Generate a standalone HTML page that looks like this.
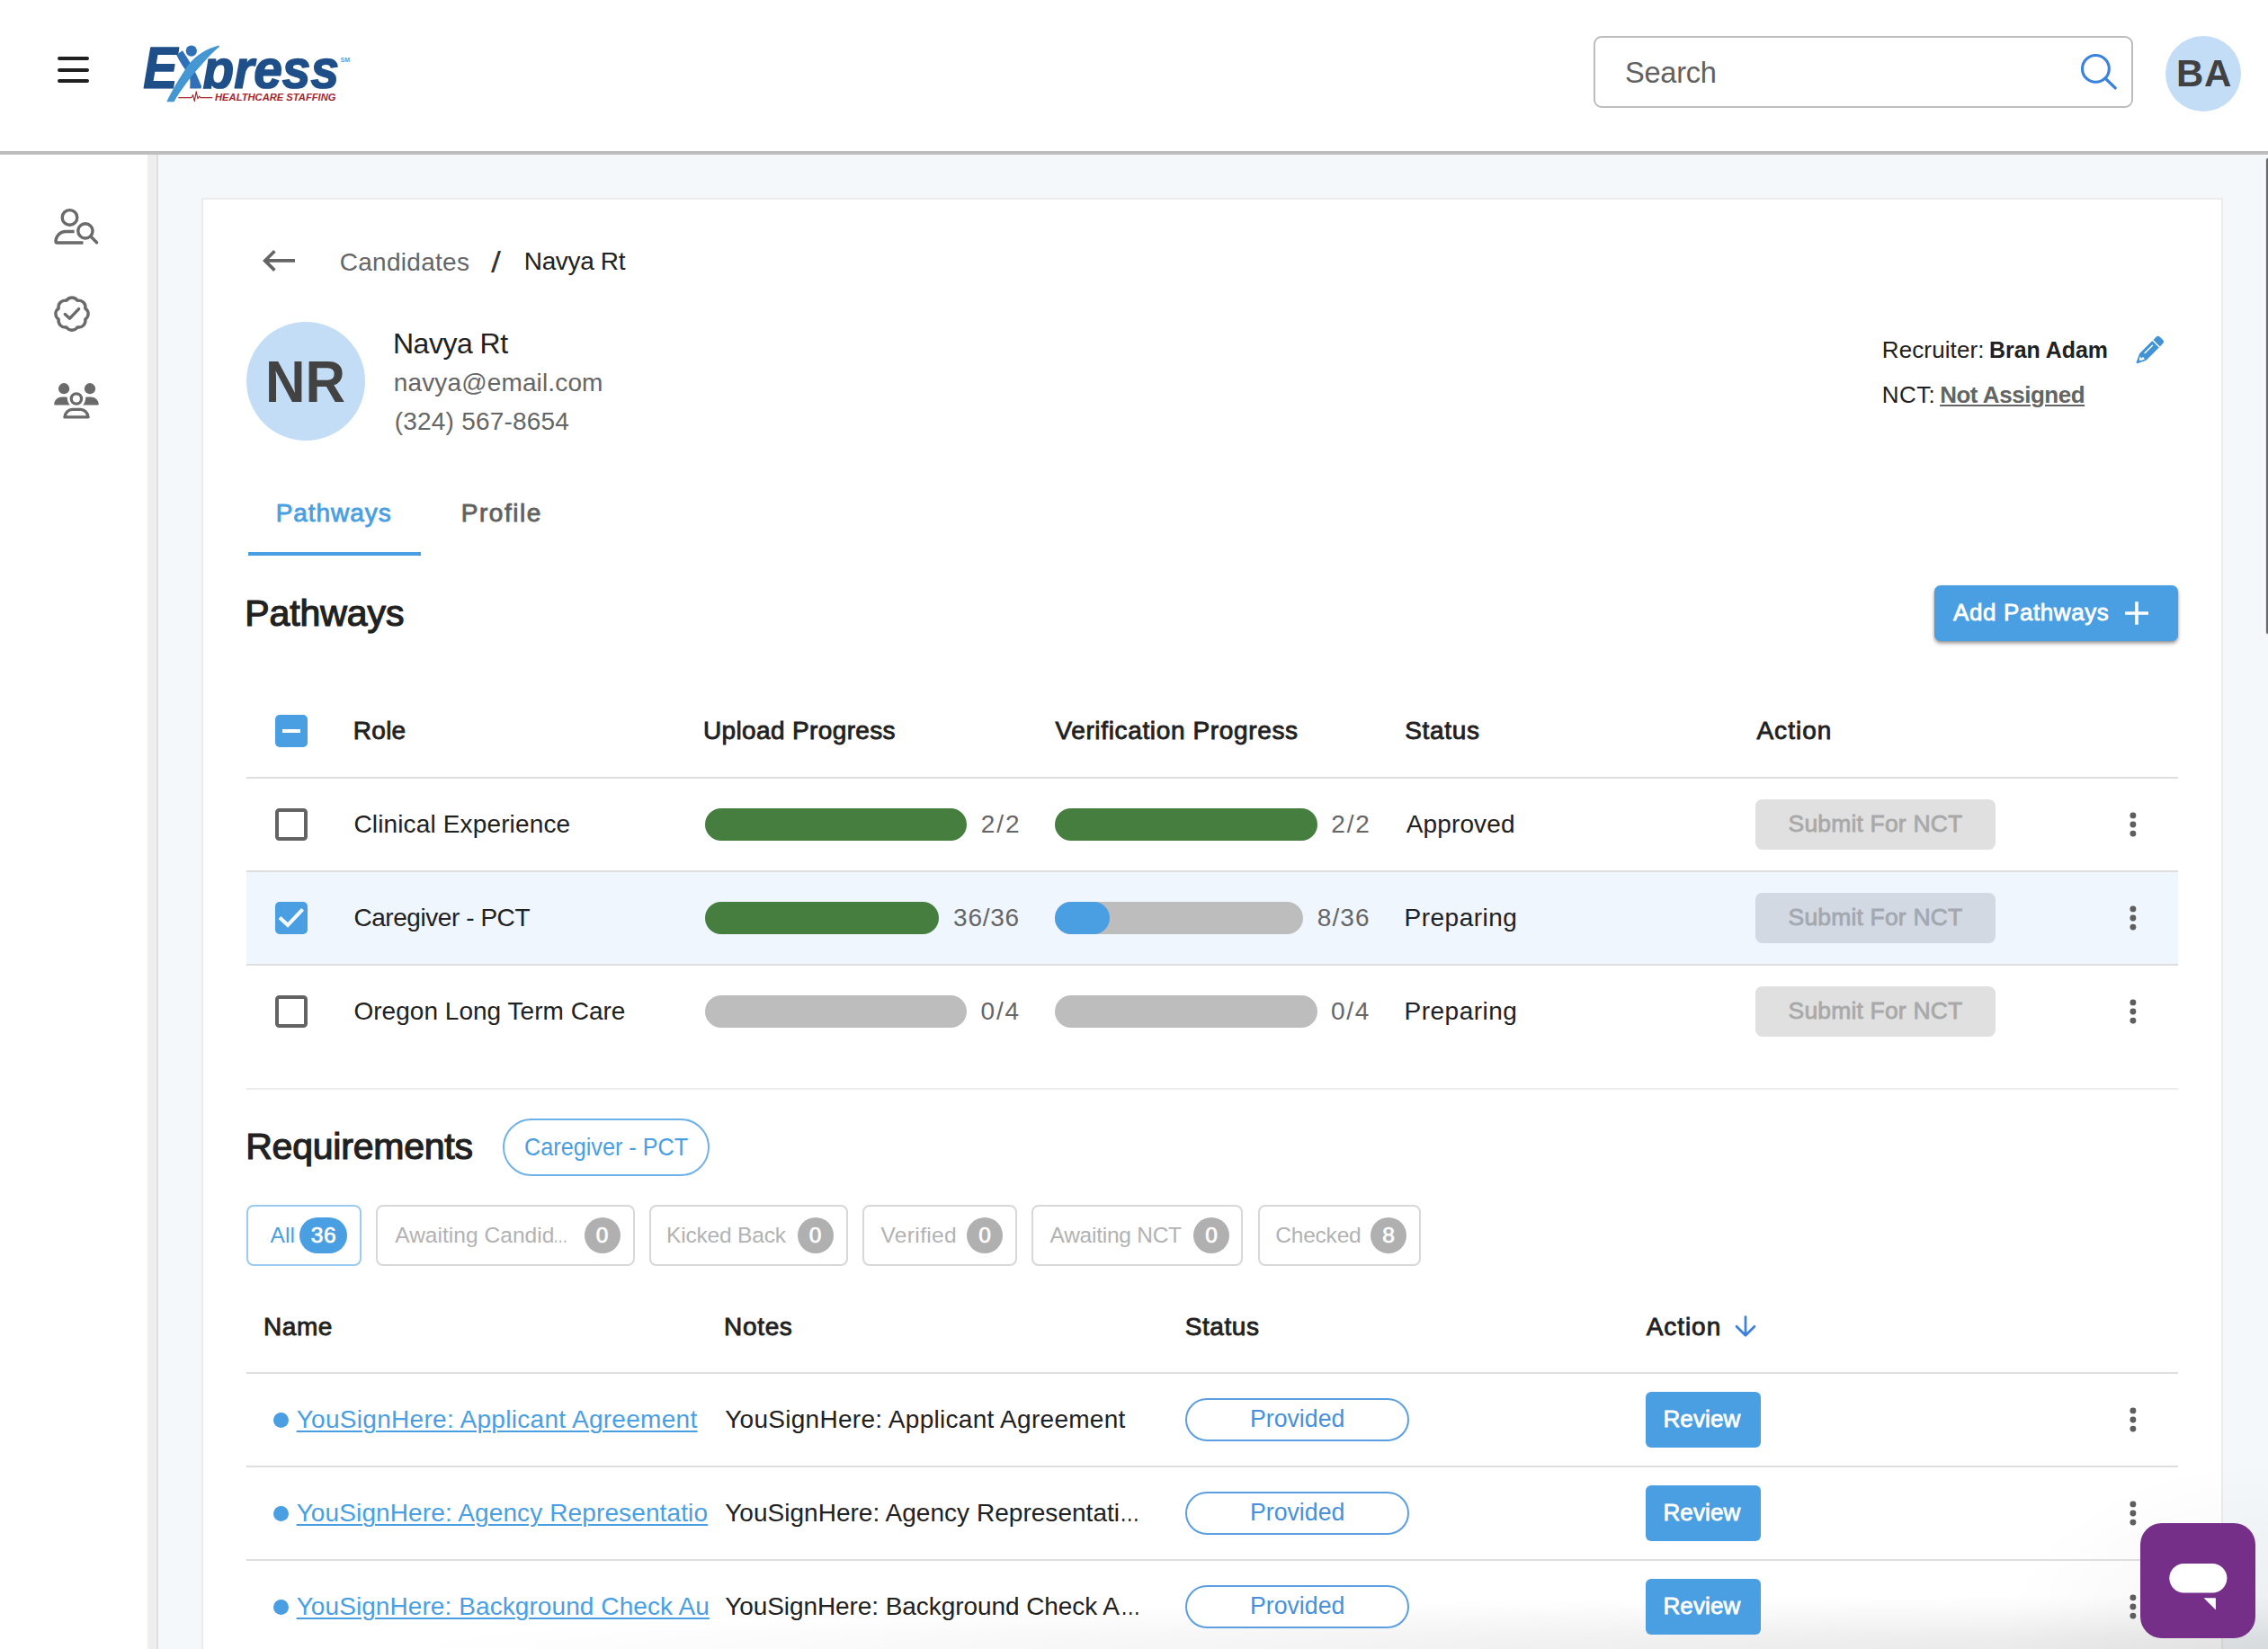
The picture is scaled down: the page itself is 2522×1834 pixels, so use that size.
<!DOCTYPE html>
<html><head><meta charset="utf-8"><title>Candidates</title>
<style>
html,body{margin:0;padding:0;}
body{width:2522px;height:1834px;overflow:hidden;background:#fff;font-family:"Liberation Sans",sans-serif;position:relative;}
.t{position:absolute;white-space:nowrap;line-height:1;}
.b{position:absolute;box-sizing:border-box;}
svg{position:absolute;overflow:visible;}
@media (max-width:1400px){html{zoom:0.5;}}
</style></head><body>
<div class="b" style="left:0px;top:0px;width:2522px;height:168px;background:#fff;"></div>
<div class="b" style="left:0px;top:168px;width:2522px;height:4px;background:#bdbdbd;"></div>
<div class="b" style="left:64px;top:63px;width:35px;height:4px;background:#1f1f1f;border-radius:2px;"></div>
<div class="b" style="left:64px;top:75.5px;width:35px;height:4px;background:#1f1f1f;border-radius:2px;"></div>
<div class="b" style="left:64px;top:88px;width:35px;height:4px;background:#1f1f1f;border-radius:2px;"></div>
<svg style="left:150px;top:40px" width="250" height="85" viewBox="150 40 250 85">
<g font-family="Liberation Sans" font-weight="bold" font-style="italic">
<clipPath id="cb"><rect x="150" y="40" width="250" height="58.7"/></clipPath>
<g clip-path="url(#cb)" fill="#1f4f88" stroke="#1f4f88" stroke-width="1.6" stroke-linejoin="round">
<text transform="translate(159.2 98) scale(0.885 1)" x="0" y="0" font-size="64.5">E</text>
<text x="225.5" y="98" font-size="60.5" textLength="151.5" lengthAdjust="spacingAndGlyphs">press</text>
</g>
<path d="M196.2 61 L202.9 56.3 C208 64 213 72 216.5 79 C219.5 85 222 91 224.2 96.5 L223.4 98.6 L211.2 98.6 C211.6 93 211.6 88 210.6 83 C205 77 200 69 196.2 61 Z" fill="#2f70b8"/>
<path d="M185.3 113.3 C191 101 200 86 209.5 72 C217 62 230 53.5 243.7 50.4 L244 52 C236 58 226 70 218.3 78.6 C210 88 200 102 193.5 113.3 Z" fill="#4497d3"/>
<circle cx="212.8" cy="56.6" r="6.1" fill="#2f70b8"/>
<text x="378.6" y="69" font-size="8" fill="#5a9fd6" font-style="normal" textLength="10.5" lengthAdjust="spacingAndGlyphs">SM</text>
<path d="M198.3 108.6 H213 L214.6 105.5 L216.3 112.6 L218.2 101.8 L220 109.8 L221.6 107 L223 108.6 H236.3" fill="none" stroke="#a5272d" stroke-width="1.1" stroke-linejoin="round"/>
<text x="239" y="112.3" font-size="11.8" fill="#a5272d" textLength="134.5" lengthAdjust="spacingAndGlyphs">HEALTHCARE STAFFING</text>
</g></svg>
<div class="b" style="left:1772px;top:40px;width:600px;height:80px;border:2px solid #bdbdbd;border-radius:9px;background:#fff;"></div>
<div class="t " style="left:1807.00px;top:65.00px;font-size:32.6px;color:#616161;letter-spacing:-0.260px;">Search</div>
<svg style="left:2310px;top:56px" width="50" height="50" viewBox="2310 56 50 50">
<circle cx="2330.4" cy="76.4" r="14.9" fill="none" stroke="#3b82dc" stroke-width="3.1"/>
<path d="M2341.2 87.2 L2352.2 97.9" stroke="#3b82dc" stroke-width="3.3" stroke-linecap="round"/></svg>
<div class="b" style="left:2408px;top:40px;width:84px;height:84px;border-radius:50%;background:#c3ddf7;"></div>
<div class="t " style="left:2420.05px;top:61.00px;font-size:42px;color:#414141;font-weight:bold;letter-spacing:0.550px;">BA</div>
<div class="b" style="left:0px;top:172px;width:164px;height:1662px;background:#fff;"></div>
<div class="b" style="left:164px;top:172px;width:10px;height:1662px;background:#eeeeee;"></div>
<div class="b" style="left:174px;top:172px;width:2px;height:1662px;background:#dedede;"></div>
<div class="b" style="left:176px;top:172px;width:2346px;height:1662px;background:#f4f8fb;"></div>
<svg style="left:56px;top:228px" width="60" height="50" viewBox="56 228 60 50">
<g fill="none" stroke="#6a6a6a" stroke-width="3.4" stroke-linecap="round" stroke-linejoin="round">
<circle cx="77.5" cy="241.9" r="8.3"/>
<path d="M82.6 257.5 H73.5 C66 257.5 62 263.5 62 268.4 Q62 270 63.6 270 H92.5" stroke-linecap="butt"/>
<circle cx="94.9" cy="256.9" r="8.1"/>
<path d="M101 263 L107.6 269.7"/>
</g></svg>
<svg style="left:56px;top:325px" width="50" height="50" viewBox="56 325 50 50">
<g fill="none" stroke="#6a6a6a" stroke-width="3.4" stroke-linecap="round" stroke-linejoin="round">
<path d="M73.88 334.32 A7.3 7.3 0 0 1 86.12 334.32 A7.3 7.3 0 0 1 94.78 342.98 A7.3 7.3 0 0 1 94.78 355.22 A7.3 7.3 0 0 1 86.12 363.88 A7.3 7.3 0 0 1 73.88 363.88 A7.3 7.3 0 0 1 65.22 355.22 A7.3 7.3 0 0 1 65.22 342.98 A7.3 7.3 0 0 1 73.88 334.32 Z"/>
<path d="M72.3 349.5 L77.6 354.2 L87.6 343.6"/>
</g></svg>
<svg style="left:56px;top:421px" width="60" height="50" viewBox="56 421 60 50">
<g fill="#6a6a6a">
<circle cx="71.1" cy="432.2" r="6.1"/>
<circle cx="100" cy="432.2" r="6.1"/>
<path d="M60.2 449.3 C60.6 444.5 64.5 441.4 69 441.4 H73.6 Q74.8 441.4 74.8 442.6 C74.9 445.5 75.8 448.2 77.8 450.6 H61.4 Q60.1 450.6 60.2 449.3 Z"/>
<path d="M109.8 449.3 C109.4 444.5 105.5 441.4 101 441.4 H96.4 Q95.2 441.4 95.2 442.6 C95.1 445.5 94.2 448.2 92.2 450.6 H108.6 Q109.9 450.6 109.8 449.3 Z"/>
</g>
<g fill="none" stroke="#6a6a6a" stroke-width="3.3" stroke-linejoin="round">
<circle cx="84.9" cy="443.5" r="5.65"/>
<path d="M71.9 463.9 C72.4 459.5 76 455.3 80.5 455.3 H89.5 C94 455.3 97.6 459.5 98.1 463.9 Z"/>
</g></svg>
<div class="b" style="left:224px;top:220px;width:2248px;height:1700px;background:#fff;border:2px solid #ececec;"></div>
<div class="b" style="left:420px;top:1774px;width:2102px;height:60px;background:radial-gradient(ellipse 100% 100% at 100% 100%,rgba(0,0,0,0.085) 0%,rgba(0,0,0,0.07) 25%,rgba(0,0,0,0.04) 55%,rgba(0,0,0,0.012) 85%,rgba(0,0,0,0) 100%);"></div>
<div class="b" style="left:2222px;top:1624px;width:300px;height:210px;background:radial-gradient(ellipse 100% 100% at 100% 100%,rgba(0,0,0,0.035) 0%,rgba(0,0,0,0.02) 60%,rgba(0,0,0,0) 100%);"></div>
<svg style="left:288px;top:274px" width="44" height="34" viewBox="288 274 44 34">
<path d="M328 289.9 H296 M305.4 279.2 L294.6 289.9 L305.4 300.6" fill="none" stroke="#646464" stroke-width="3.6" stroke-linecap="butt" stroke-linejoin="miter"/></svg>
<div class="t " style="left:377.75px;top:278.00px;font-size:28px;color:#666;letter-spacing:0.278px;">Candidates</div>
<div class="t " style="left:546.40px;top:275.00px;font-size:33.5px;color:#333;transform:scaleX(1.18);transform-origin:0 0;">/</div>
<div class="t " style="left:582.75px;top:277.00px;font-size:28px;color:#212121;letter-spacing:-0.343px;">Navya Rt</div>
<div class="b" style="left:274px;top:358px;width:132px;height:132px;border-radius:50%;background:#c3ddf7;"></div>
<div class="t " style="left:294.97px;top:392.00px;font-size:65px;color:#424242;font-weight:bold;transform:scaleX(0.9484);transform-origin:0 0;">NR</div>
<div class="t " style="left:437.00px;top:366.00px;font-size:32px;color:#212121;letter-spacing:-0.500px;">Navya Rt</div>
<div class="t " style="left:437.75px;top:412.00px;font-size:28px;color:#666;letter-spacing:0.139px;">navya@email.com</div>
<div class="t " style="left:438.75px;top:455.00px;font-size:28px;color:#666;letter-spacing:0.208px;">(324) 567-8654</div>
<div class="t " style="left:2092.80px;top:376.00px;font-size:26px;color:#212121;letter-spacing:0.111px;">Recruiter:</div>
<div class="t " style="left:2212.42px;top:376.00px;font-size:26px;color:#212121;font-weight:bold;transform:scaleX(0.9579);transform-origin:0 0;">Bran Adam</div>
<div class="t " style="left:2092.80px;top:426.00px;font-size:26px;color:#212121;letter-spacing:0.400px;">NCT:</div>
<div class="t " style="left:2157.15px;top:426.00px;font-size:26px;color:#646464;font-weight:bold;letter-spacing:-0.468px;text-decoration:underline;text-decoration-thickness:2px;text-underline-offset:2px;">Not Assigned</div>
<svg style="left:2372px;top:370px" width="38" height="38" viewBox="2372 370 38 38">
<g transform="translate(2376 403.8) rotate(-45)"><path d="M0.3 -0.9 L9 -5 Q10 -5.3 11 -5.3 H29.8 V5.3 H11 Q10 5.3 9 5 L0.3 0.9 Q-0.6 0 0.3 -0.9 Z M31.3 -5.3 H35.6 A3.2 3.2 0 0 1 38.8 -2.1 V2.1 A3.2 3.2 0 0 1 35.6 5.3 H31.3 Z" fill="#4193d3"/><path d="M13.7 -1.5 H26.9" stroke="#fff" stroke-width="1.5"/><path d="M4.6 -0.9 L8.2 -2.6 L7.4 0 L10 0.4 L9.4 3.2 L4.6 0.9 Z" fill="#fff"/></g></svg>
<div class="t " style="left:306.67px;top:557.00px;font-size:28px;color:#4a9fe2;-webkit-text-stroke:0.84px #4a9fe2;letter-spacing:0.944px;">Pathways</div>
<div class="t " style="left:512.77px;top:557.00px;font-size:28px;color:#616161;-webkit-text-stroke:0.84px #616161;letter-spacing:1.527px;">Profile</div>
<div class="b" style="left:276px;top:614px;width:192px;height:4px;background:#4a9fe2;"></div>
<div class="t " style="left:272.37px;top:662.00px;font-size:41px;color:#212121;-webkit-text-stroke:1.23px #212121;letter-spacing:-0.104px;">Pathways</div>
<div class="b" style="left:2151px;top:651px;width:271px;height:62px;background:#4a9fe2;border-radius:7px;box-shadow:0 3px 4px rgba(0,0,0,0.3),0 1px 3px rgba(0,0,0,0.2);"></div>
<div class="t " style="left:2172.09px;top:668.00px;font-size:26px;color:#fff;-webkit-text-stroke:0.78px #fff;letter-spacing:0.597px;">Add Pathways</div>
<svg style="left:2360px;top:666px" width="32" height="32" viewBox="2360 666 32 32"><path d="M2363 682 H2389 M2376 669.2 V694.8" stroke="#fff" stroke-width="3.6" fill="none"/></svg>
<div class="b" style="left:306px;top:795px;width:36px;height:36px;background:#4a9fe2;border-radius:5px;"></div>
<div class="b" style="left:314px;top:811px;width:20px;height:4px;background:#fff;"></div>
<div class="t " style="left:392.87px;top:799.00px;font-size:28px;color:#212121;-webkit-text-stroke:0.84px #212121;letter-spacing:0.237px;">Role</div>
<div class="t " style="left:782.02px;top:799.00px;font-size:28px;color:#212121;-webkit-text-stroke:0.84px #212121;letter-spacing:0.361px;">Upload Progress</div>
<div class="t " style="left:1173.42px;top:799.00px;font-size:28px;color:#212121;-webkit-text-stroke:0.84px #212121;letter-spacing:0.646px;">Verification Progress</div>
<div class="t " style="left:1562.17px;top:799.00px;font-size:28px;color:#212121;-webkit-text-stroke:0.84px #212121;letter-spacing:0.682px;">Status</div>
<div class="t " style="left:1953.42px;top:799.00px;font-size:28px;color:#212121;-webkit-text-stroke:0.84px #212121;letter-spacing:1.032px;">Action</div>
<div class="b" style="left:274px;top:864px;width:2148px;height:2px;background:#dedede;"></div>
<div class="b" style="left:306px;top:899px;width:36px;height:36px;border:4px solid #636363;border-radius:4.5px;background:#fff;"></div>
<div class="t " style="left:393.45px;top:903.00px;font-size:28px;color:#212121;letter-spacing:0.142px;">Clinical Experience</div>
<div class="b" style="left:783.6px;top:899px;width:291.5px;height:36px;background:#467e3f;border-radius:18px;overflow:hidden;"></div>
<div class="t " style="left:1090.75px;top:903.00px;font-size:28px;color:#666;letter-spacing:1.925px;">2/2</div>
<div class="b" style="left:1173px;top:899px;width:291.5px;height:36px;background:#467e3f;border-radius:18px;overflow:hidden;"></div>
<div class="t " style="left:1480.15px;top:903.00px;font-size:28px;color:#666;letter-spacing:1.925px;">2/2</div>
<div class="t " style="left:1563.80px;top:903.00px;font-size:28px;color:#212121;letter-spacing:0.114px;">Approved</div>
<div class="b" style="left:1952px;top:889px;width:267px;height:56px;background:#e0e0e0;border-radius:7.5px;"></div>
<div class="t " style="left:1988.55px;top:903.00px;font-size:26.5px;color:#a9a9a9;-webkit-text-stroke:0.79px #a9a9a9;letter-spacing:0.173px;">Submit For NCT</div>
<svg style="left:2360px;top:897px" width="24" height="40" viewBox="0 0 24 40"><g fill="#5e5e5e"><circle cx="11.9" cy="9.9" r="3.45"/><circle cx="11.9" cy="20" r="3.45"/><circle cx="11.9" cy="30.1" r="3.45"/></g></svg>
<div class="b" style="left:274px;top:970px;width:2148px;height:102px;background:#eff6fe;"></div>
<div class="b" style="left:274px;top:968px;width:2148px;height:2px;background:#dedede;"></div>
<div class="b" style="left:306px;top:1003px;width:36px;height:36px;background:#4a9fe2;border-radius:5px;"></div>
<svg style="left:306px;top:1003px" width="36" height="36" viewBox="0 0 36 36"><path d="M5 17.6 L14 25.8 L30.6 8.4" stroke="#f4f9fe" stroke-width="4.1" fill="none"/></svg>
<div class="t " style="left:393.45px;top:1007.00px;font-size:28px;color:#212121;letter-spacing:-0.443px;">Caregiver - PCT</div>
<div class="b" style="left:783.6px;top:1003px;width:260px;height:36px;background:#467e3f;border-radius:18px;overflow:hidden;"></div>
<div class="t " style="left:1060.10px;top:1007.00px;font-size:28px;color:#666;letter-spacing:0.750px;">36/36</div>
<div class="b" style="left:1173px;top:1003px;width:276px;height:36px;background:#bdbdbd;border-radius:18px;overflow:hidden;"></div>
<div class="b" style="left:1173px;top:1003px;width:61px;height:36px;background:#4a9fe2;border-radius:18px;"></div>
<div class="t " style="left:1464.75px;top:1007.00px;font-size:28px;color:#666;letter-spacing:1.083px;">8/36</div>
<div class="t " style="left:1561.55px;top:1007.00px;font-size:28px;color:#212121;letter-spacing:0.494px;">Preparing</div>
<div class="b" style="left:1952px;top:993px;width:267px;height:56px;background:#d3d9e2;border-radius:7.5px;"></div>
<div class="t " style="left:1988.55px;top:1007.00px;font-size:26.5px;color:#a3a8b0;-webkit-text-stroke:0.79px #a3a8b0;letter-spacing:0.173px;">Submit For NCT</div>
<svg style="left:2360px;top:1001px" width="24" height="40" viewBox="0 0 24 40"><g fill="#5e5e5e"><circle cx="11.9" cy="9.9" r="3.45"/><circle cx="11.9" cy="20" r="3.45"/><circle cx="11.9" cy="30.1" r="3.45"/></g></svg>
<div class="b" style="left:274px;top:1072px;width:2148px;height:2px;background:#dedede;"></div>
<div class="b" style="left:306px;top:1107px;width:36px;height:36px;border:4px solid #636363;border-radius:4.5px;background:#fff;"></div>
<div class="t " style="left:393.45px;top:1111.00px;font-size:28px;color:#212121;letter-spacing:0.028px;">Oregon Long Term Care</div>
<div class="b" style="left:783.6px;top:1107px;width:291.5px;height:36px;background:#bdbdbd;border-radius:18px;overflow:hidden;"></div>
<div class="t " style="left:1090.60px;top:1111.00px;font-size:28px;color:#666;letter-spacing:1.750px;">0/4</div>
<div class="b" style="left:1173px;top:1107px;width:291.5px;height:36px;background:#bdbdbd;border-radius:18px;overflow:hidden;"></div>
<div class="t " style="left:1480.00px;top:1111.00px;font-size:28px;color:#666;letter-spacing:1.750px;">0/4</div>
<div class="t " style="left:1561.55px;top:1111.00px;font-size:28px;color:#212121;letter-spacing:0.494px;">Preparing</div>
<div class="b" style="left:1952px;top:1097px;width:267px;height:56px;background:#e0e0e0;border-radius:7.5px;"></div>
<div class="t " style="left:1988.55px;top:1111.00px;font-size:26.5px;color:#a9a9a9;-webkit-text-stroke:0.79px #a9a9a9;letter-spacing:0.173px;">Submit For NCT</div>
<svg style="left:2360px;top:1105px" width="24" height="40" viewBox="0 0 24 40"><g fill="#5e5e5e"><circle cx="11.9" cy="9.9" r="3.45"/><circle cx="11.9" cy="20" r="3.45"/><circle cx="11.9" cy="30.1" r="3.45"/></g></svg>
<div class="b" style="left:274px;top:1210px;width:2148px;height:2px;background:#ececec;"></div>
<div class="t " style="left:273.17px;top:1255.00px;font-size:41px;color:#212121;-webkit-text-stroke:1.23px #212121;letter-spacing:-0.212px;">Requirements</div>
<div class="b" style="left:558.6px;top:1244px;width:230.2px;height:63.6px;border:2px solid #6fb2e9;border-radius:32px;background:#fff;"></div>
<div class="t " style="left:582.67px;top:1262.00px;font-size:28px;color:#4a9fe2;transform:scaleX(0.9007);transform-origin:0 0;">Caregiver - PCT</div>
<div class="b" style="left:274.3px;top:1340px;width:127.5px;height:67.6px;border:2px solid #9ccbf1;background:#fff;border-radius:8px;"></div>
<div class="t " style="left:300.60px;top:1362.00px;font-size:24.5px;color:#4a9fe2;letter-spacing:0.050px;">All</div>
<div class="b" style="left:333.2px;top:1354px;width:53.0px;height:39.6px;background:#4a9fe2;border-radius:20px;"></div>
<div class="t " style="left:345.67px;top:1362.00px;font-size:24.5px;color:#fff;-webkit-text-stroke:0.73px #fff;letter-spacing:0.815px;">36</div>
<div class="b" style="left:418px;top:1340px;width:287.6px;height:67.6px;border:2px solid #d8d8d8;background:#fff;border-radius:8px;"></div>
<div class="t " style="left:439.20px;top:1362.00px;font-size:24.5px;color:#b2b2b2;letter-spacing:0.043px;">Awaiting Candid</div>
<div class="t " style="left:615.03px;top:1362.00px;font-size:24.5px;color:#b2b2b2;transform:scaleX(0.6667);transform-origin:0 0;">…</div>
<div class="b" style="left:649.6px;top:1354px;width:40.10000000000002px;height:39.6px;background:#b0b0b0;border-radius:20px;"></div>
<div class="t " style="left:662.82px;top:1362.00px;font-size:24.5px;color:#fff;-webkit-text-stroke:0.73px #fff;">0</div>
<div class="b" style="left:722px;top:1340px;width:221px;height:67.6px;border:2px solid #d8d8d8;background:#fff;border-radius:8px;"></div>
<div class="t " style="left:741.00px;top:1362.00px;font-size:24.5px;color:#b2b2b2;letter-spacing:-0.175px;">Kicked Back</div>
<div class="b" style="left:886.5px;top:1354px;width:40.0px;height:39.6px;background:#b0b0b0;border-radius:20px;"></div>
<div class="t " style="left:899.67px;top:1362.00px;font-size:24.5px;color:#fff;-webkit-text-stroke:0.73px #fff;">0</div>
<div class="b" style="left:959px;top:1340px;width:171.5999999999999px;height:67.6px;border:2px solid #d8d8d8;background:#fff;border-radius:8px;"></div>
<div class="t " style="left:979.50px;top:1362.00px;font-size:24.5px;color:#b2b2b2;letter-spacing:0.357px;">Verified</div>
<div class="b" style="left:1075px;top:1354px;width:40px;height:39.6px;background:#b0b0b0;border-radius:20px;"></div>
<div class="t " style="left:1088.17px;top:1362.00px;font-size:24.5px;color:#fff;-webkit-text-stroke:0.73px #fff;">0</div>
<div class="b" style="left:1147px;top:1340px;width:235px;height:67.6px;border:2px solid #d8d8d8;background:#fff;border-radius:8px;"></div>
<div class="t " style="left:1167.50px;top:1362.00px;font-size:24.5px;color:#b2b2b2;letter-spacing:-0.250px;">Awaiting NCT</div>
<div class="b" style="left:1327px;top:1354px;width:40px;height:39.6px;background:#b0b0b0;border-radius:20px;"></div>
<div class="t " style="left:1340.17px;top:1362.00px;font-size:24.5px;color:#fff;-webkit-text-stroke:0.73px #fff;">0</div>
<div class="b" style="left:1399px;top:1340px;width:180.5px;height:67.6px;border:2px solid #d8d8d8;background:#fff;border-radius:8px;"></div>
<div class="t " style="left:1418.25px;top:1362.00px;font-size:24.5px;color:#b2b2b2;letter-spacing:-0.208px;">Checked</div>
<div class="b" style="left:1524px;top:1354px;width:40px;height:39.6px;background:#b0b0b0;border-radius:20px;"></div>
<div class="t " style="left:1537.17px;top:1362.00px;font-size:24.5px;color:#fff;-webkit-text-stroke:0.73px #fff;">8</div>
<div class="t " style="left:293.07px;top:1462.00px;font-size:28px;color:#212121;-webkit-text-stroke:0.84px #212121;letter-spacing:0.537px;">Name</div>
<div class="t " style="left:805.07px;top:1462.00px;font-size:28px;color:#212121;-webkit-text-stroke:0.84px #212121;letter-spacing:0.665px;">Notes</div>
<div class="t " style="left:1317.67px;top:1462.00px;font-size:28px;color:#212121;-webkit-text-stroke:0.84px #212121;letter-spacing:0.582px;">Status</div>
<div class="t " style="left:1830.72px;top:1462.00px;font-size:28px;color:#212121;-webkit-text-stroke:0.84px #212121;letter-spacing:0.932px;">Action</div>
<svg style="left:1925px;top:1458px" width="32" height="34" viewBox="1925 1458 32 34"><path d="M1941 1464.5 V1484.6 M1931 1475.2 L1941 1485.2 L1951 1475.2" fill="none" stroke="#3b80dc" stroke-width="2.7" stroke-linecap="round" stroke-linejoin="round"/></svg>
<div class="b" style="left:274px;top:1526px;width:2148px;height:2px;background:#dedede;"></div>
<div class="b" style="left:274px;top:1630px;width:2148px;height:2px;background:#dedede;"></div>
<div class="b" style="left:303.8px;top:1570.7px;width:17px;height:17px;background:#4a9fe2;border-radius:50%;"></div>
<div class="t " style="left:329.65px;top:1565.00px;font-size:28px;color:#4a9fe2;letter-spacing:0.298px;text-decoration:underline;text-decoration-thickness:2px;text-underline-offset:3px;">YouSignHere: Applicant Agreement</div>
<div class="t " style="left:806.15px;top:1565.00px;font-size:28px;color:#212121;letter-spacing:0.285px;">YouSignHere: Applicant Agreement</div>
<div class="b" style="left:1318.4px;top:1555.2px;width:249px;height:47.6px;border:2px solid #5c9fe0;border-radius:24px;background:#fff;"></div>
<div class="t " style="left:1389.86px;top:1564.00px;font-size:28px;color:#4791dc;transform:scaleX(0.9531);transform-origin:0 0;">Provided</div>
<div class="b" style="left:1830.2px;top:1548px;width:127.6px;height:62px;background:#4a9fe2;border-radius:6px;"></div>
<div class="t " style="left:1849.39px;top:1565.00px;font-size:26px;color:#fff;-webkit-text-stroke:0.78px #fff;letter-spacing:0.154px;">Review</div>
<svg style="left:2360px;top:1559px" width="24" height="40" viewBox="0 0 24 40"><g fill="#5e5e5e"><circle cx="11.9" cy="9.9" r="3.45"/><circle cx="11.9" cy="20" r="3.45"/><circle cx="11.9" cy="30.1" r="3.45"/></g></svg>
<div class="b" style="left:274px;top:1734px;width:2148px;height:2px;background:#dedede;"></div>
<div class="b" style="left:303.8px;top:1674.7px;width:17px;height:17px;background:#4a9fe2;border-radius:50%;"></div>
<div class="t " style="left:329.65px;top:1669.00px;font-size:28px;color:#4a9fe2;letter-spacing:0.120px;text-decoration:underline;text-decoration-thickness:2px;text-underline-offset:3px;">YouSignHere: Agency Representatio</div>
<div class="t " style="left:806.15px;top:1669.00px;font-size:28px;color:#212121;letter-spacing:0.032px;">YouSignHere: Agency Representati</div>
<div class="t " style="left:1244.60px;top:1669.00px;font-size:28px;color:#212121;transform:scaleX(0.8000);transform-origin:0 0;">…</div>
<div class="b" style="left:1318.4px;top:1659.2px;width:249px;height:47.6px;border:2px solid #5c9fe0;border-radius:24px;background:#fff;"></div>
<div class="t " style="left:1389.86px;top:1668.00px;font-size:28px;color:#4791dc;transform:scaleX(0.9531);transform-origin:0 0;">Provided</div>
<div class="b" style="left:1830.2px;top:1652px;width:127.6px;height:62px;background:#4a9fe2;border-radius:6px;"></div>
<div class="t " style="left:1849.39px;top:1669.00px;font-size:26px;color:#fff;-webkit-text-stroke:0.78px #fff;letter-spacing:0.154px;">Review</div>
<svg style="left:2360px;top:1663px" width="24" height="40" viewBox="0 0 24 40"><g fill="#5e5e5e"><circle cx="11.9" cy="9.9" r="3.45"/><circle cx="11.9" cy="20" r="3.45"/><circle cx="11.9" cy="30.1" r="3.45"/></g></svg>
<div class="b" style="left:274px;top:1838px;width:2148px;height:2px;background:#dedede;"></div>
<div class="b" style="left:303.8px;top:1778.7px;width:17px;height:17px;background:#4a9fe2;border-radius:50%;"></div>
<div class="t " style="left:329.65px;top:1773.00px;font-size:28px;color:#4a9fe2;letter-spacing:0.081px;text-decoration:underline;text-decoration-thickness:2px;text-underline-offset:3px;">YouSignHere: Background Check Au</div>
<div class="t " style="left:806.15px;top:1773.00px;font-size:28px;color:#212121;letter-spacing:-0.073px;">YouSignHere: Background Check A</div>
<div class="t " style="left:1246.40px;top:1773.00px;font-size:28px;color:#212121;transform:scaleX(0.8000);transform-origin:0 0;">…</div>
<div class="b" style="left:1318.4px;top:1763.2px;width:249px;height:47.6px;border:2px solid #5c9fe0;border-radius:24px;background:#fff;"></div>
<div class="t " style="left:1389.86px;top:1772.00px;font-size:28px;color:#4791dc;transform:scaleX(0.9531);transform-origin:0 0;">Provided</div>
<div class="b" style="left:1830.2px;top:1756px;width:127.6px;height:62px;background:#4a9fe2;border-radius:6px;"></div>
<div class="t " style="left:1849.39px;top:1773.00px;font-size:26px;color:#fff;-webkit-text-stroke:0.78px #fff;letter-spacing:0.154px;">Review</div>
<svg style="left:2360px;top:1767px" width="24" height="40" viewBox="0 0 24 40"><g fill="#5e5e5e"><circle cx="11.9" cy="9.9" r="3.45"/><circle cx="11.9" cy="20" r="3.45"/><circle cx="11.9" cy="30.1" r="3.45"/></g></svg>
<div class="b" style="left:2519px;top:175px;width:6px;height:531px;background:#696969;border:1px solid rgba(255,255,255,0.85);border-radius:4px;"></div>
<div class="b" style="left:2380px;top:1694px;width:128px;height:128px;background:#752f89;border-radius:24px;"></div>
<svg style="left:2380px;top:1694px" width="128" height="128" viewBox="2380 1694 128 128">
<rect x="2412.3" y="1739.1" width="64.1" height="32.4" rx="16.2" fill="#fff"/>
<path d="M2450.6 1777.3 H2463.9 V1790.5 Z" fill="#fff"/></svg>
</body></html>
